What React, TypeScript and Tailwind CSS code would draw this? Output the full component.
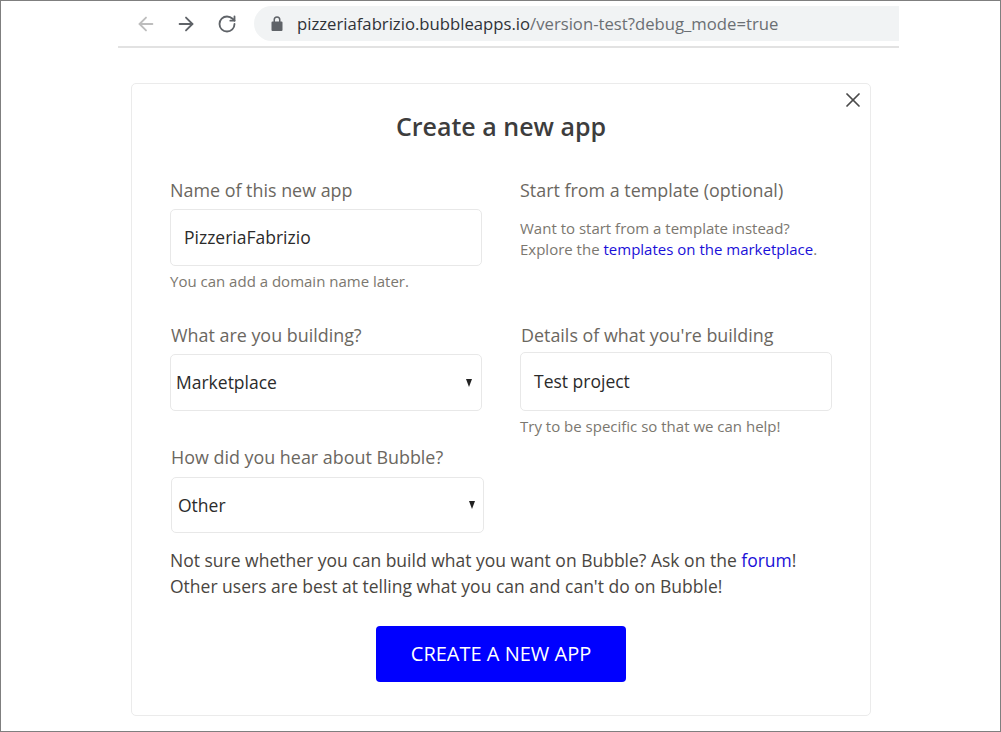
import { ArrowLeft, ArrowRight, RotateCw, X } from "lucide-react";

function Select({ value, className }: { value: string; className: string }) {
  return (
    <div
      className={`flex items-center justify-between rounded-[5px] border border-[#e8e8e8] bg-white text-[17.5px] text-[#2b2b2b] ${className}`}
    >
      <span>{value}</span>
      <span className="h-0 w-0 border-x-[3.5px] border-t-[8px] border-x-transparent border-t-[#222]" />
    </div>
  );
}

export default function App() {
  return (
    <div
      className="h-[732px] w-[1001px] overflow-hidden border border-[#7f7f7f] bg-white"
      style={{ fontFamily: '"Open Sans", sans-serif' }}
    >
      {/* browser bar */}
      <div className="ml-[117px] flex h-[47px] w-[781px] items-start border-b-2 border-[#e2e2e2] pt-[5px]">
        <div className="flex h-[35px] w-[136px] items-center gap-[18px] pl-[17px]">
          <ArrowLeft size={22} strokeWidth={2} className="text-[#bdbdbd]" />
          <ArrowRight size={22} strokeWidth={2} className="text-[#5f6368]" />
          <RotateCw size={20} strokeWidth={2.2} className="ml-[2px] text-[#5f6368]" />
        </div>
        <div className="flex h-[35px] flex-1 items-center rounded-l-[18px] bg-[#f1f3f4] pl-[17px]">
          <svg width="12" height="15" viewBox="0 0 12 15" className="text-[#5f6368]">
            <path
              fill="currentColor"
              d="M1.5 5.5H2.5V3.8a3.5 3.5 0 0 1 7 0V5.5h1a1 1 0 0 1 1 1V14a1 1 0 0 1-1 1h-9a1 1 0 0 1-1-1V6.500a1 1 0 0 1 1-1ZM4 5.500h4V3.800a2 2 0 0 0-4 0Z"
            />
          </svg>
          <span className="ml-[14px] text-[16.7px] text-[#6b6f73]">
            <span className="text-[#2f3237]">pizzeriafabrizio.bubbleapps.io</span>/version-test?debug_mode=true
          </span>
        </div>
      </div>

      {/* dialog */}
      <div className="relative ml-[130px] mt-[35px] h-[633px] w-[740px] rounded-[5px] border border-[#ebebeb] bg-white pl-[38px] pt-[25px]">
        <X size={24} strokeWidth={1.7} className="absolute right-[5px] top-[4px] text-[#4a4a4a]" />
        <h1 className="mr-[38px] text-center text-[25px] leading-[34px] font-semibold text-[#3d3d3d]">
          Create a new app
        </h1>

        <div className="mt-[35px] flex">
          <div className="w-[312px]">
            <p className="text-[17.9px] leading-[24px] text-[#6b675f]">Name of this new app</p>
            <div className="mt-[7px] flex h-[57px] items-center rounded-[5px] border border-[#e8e8e8] pl-[13px] text-[17.5px] text-[#2b2b2b]">
              PizzeriaFabrizio
            </div>
            <p className="mt-[6px] text-[15px] leading-[19px] text-[#7b776f]">You can add a domain name later.</p>
          </div>
          <div className="ml-[38px] w-[312px]">
            <p className="text-[17.9px] leading-[24px] text-[#6b675f]">Start from a template (optional)</p>
            <p className="mt-[16px] text-[15px] leading-[21px] text-[#7b776f]">
              Want to start from a template instead?
              <br />
              Explore the <span className="text-[#1a10d8]">templates on the marketplace</span>.
            </p>
          </div>
        </div>

        <div className="mt-[32px] flex">
          <div className="w-[312px]">
            <p className="ml-[1px] text-[17.9px] leading-[24px] text-[#6b675f]">What are you building?</p>
            <Select value="Marketplace" className="mt-[7px] h-[57px] w-[312px] pl-[5px] pr-[9px]" />
          </div>
          <div className="ml-[38px] w-[312px]">
            <p className="ml-[1px] text-[17.9px] leading-[24px] text-[#6b675f]">Details of what you're building</p>
            <div className="mt-[5px] flex h-[59px] items-center rounded-[5px] border border-[#e8e8e8] pl-[13px] text-[17.5px] text-[#2b2b2b]">
              Test project
            </div>
            <p className="mt-[6px] text-[15px] leading-[19px] text-[#7b776f]">Try to be specific so that we can help!</p>
          </div>
        </div>

        <div className="mt-[9px] ml-[1px]">
          <p className="text-[17.9px] leading-[24px] text-[#6b675f]">How did you hear about Bubble?</p>
          <Select value="Other" className="mt-[8px] h-[56px] w-[313px] pl-[6px] pr-[8px]" />
        </div>

        <p className="mt-[14px] text-[17.5px] leading-[26px] text-[#4a463f]">
          Not sure whether you can build what you want on Bubble? Ask on the{" "}
          <span className="text-[#1a10d8]">forum</span>!
          <br />
          Other users are best at telling what you can and can't do on Bubble!
        </p>

        <div className="mr-[38px] mt-[27px] flex justify-center">
          <button className="h-[56px] w-[250px] rounded-[4px] bg-[#0000ff] text-[20px] text-white">
            CREATE A NEW APP
          </button>
        </div>
      </div>
    </div>
  );
}
